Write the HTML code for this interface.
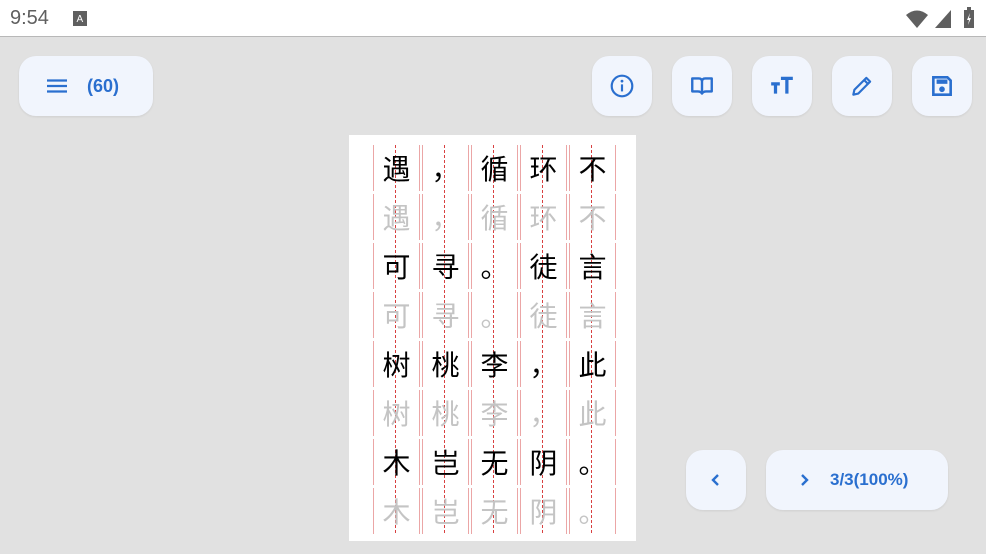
<!DOCTYPE html>
<html><head><meta charset="utf-8"><style>
*{margin:0;padding:0;box-sizing:border-box}
body{width:986px;height:554px;overflow:hidden;background:#e1e1e1;font-family:"Liberation Sans","Noto Sans CJK SC",sans-serif;position:relative}
.sb{position:absolute;left:0;top:0;width:986px;height:37px;background:#fff;border-bottom:1px solid #b8b8b8}
.time{position:absolute;left:10px;top:7px;font-size:20px;color:#5f5f5f}
.btn{position:absolute;background:#f1f5fd;border-radius:17px;box-shadow:0 1px 2px rgba(0,0,0,.08);display:flex;align-items:center;justify-content:center;color:#2a6fcf;font-weight:bold}
.paper{position:absolute;left:349px;top:135px;width:287px;height:406px;background:#fff}
.grid{position:absolute;left:373px;top:145px;display:grid;grid-template-columns:repeat(5,47px);grid-template-rows:repeat(8,46px);column-gap:2px;row-gap:3px}
.c{font-size:28px;line-height:46px;text-align:center;color:#000;font-family:"Noto Sans CJK SC",sans-serif}
.g .c{color:#c4c4c4}
.row{display:contents}
</style></head><body>
<div class="sb"><span class="time">9:54</span>
<svg style="position:absolute;left:73px;top:11px" width="14" height="15"><rect width="14" height="15" fill="#5f5f5f"/><text x="3.5" y="11" font-size="10" fill="#fff" font-family="Liberation Sans">A</text></svg>
<svg style="position:absolute;left:905px;top:9px" width="24" height="20"><path d="M1 6 Q12 -3 23 6 L12 19 Z" fill="#5f5f5f"/></svg>
<svg style="position:absolute;left:934px;top:9px" width="18" height="20"><path d="M17 1 V19 H1 Z" fill="#5f5f5f"/></svg>
<svg style="position:absolute;left:964px;top:7px" width="10" height="22"><rect x="0" y="3" width="10" height="18" fill="#5f5f5f"/><rect x="3" y="0" width="4" height="3" fill="#5f5f5f"/><path d="M6 6 L3 13 H5 L4 18 L7 11 H5 Z" fill="#fff"/></svg>
</div>

<div class="btn" style="left:19px;top:56px;width:134px;height:60px;justify-content:flex-start">
<svg style="margin-left:28px" width="20" height="14"><path d="M0 1.5H20M0 7H20M0 12.5H20" stroke="#2a6fcf" stroke-width="2.2"/></svg>
<span style="margin-left:20px;font-size:18px">(60)</span></div>

<div class="btn" style="left:592px;top:56px;width:60px;height:60px"><svg width="26" height="26" viewBox="0 0 24 24"><circle cx="12" cy="12" r="9.5" fill="none" stroke="#2a6fcf" stroke-width="2"/><rect x="11" y="10.5" width="2" height="6.5" fill="#2a6fcf"/><circle cx="12" cy="7.5" r="1.3" fill="#2a6fcf"/></svg></div>
<div class="btn" style="left:672px;top:56px;width:60px;height:60px"><svg width="26" height="26" viewBox="0 0 24 24"><path d="M3 5H9Q12 5 12 8V19Q11 17 8 17H3Z M21 5H15Q12 5 12 8V19Q13 17 16 17H21Z" fill="none" stroke="#2a6fcf" stroke-width="2.2" stroke-linejoin="round"/></svg></div>
<div class="btn" style="left:752px;top:56px;width:60px;height:60px"><svg width="26" height="26" viewBox="0 0 24 24"><path d="M2 10H10M6 10V19M11 5H22M16.5 5V19" stroke="#2a6fcf" stroke-width="3"/></svg></div>
<div class="btn" style="left:832px;top:56px;width:60px;height:60px"><svg width="26" height="26" viewBox="0 0 24 24"><path d="M4 20L5 15.5L16 4.5L19.5 8L8.5 19Z M14 6.5L17.5 10" fill="none" stroke="#2a6fcf" stroke-width="2" stroke-linejoin="round"/></svg></div>
<div class="btn" style="left:912px;top:56px;width:60px;height:60px"><svg width="26" height="26" viewBox="0 0 24 24"><path d="M4 4H17L20 7V20H4Z" fill="none" stroke="#2a6fcf" stroke-width="2.4"/><rect x="7" y="6" width="10" height="4" fill="#2a6fcf"/><circle cx="12" cy="15" r="2.6" fill="#2a6fcf"/></svg></div>

<div class="paper"></div>
<svg style="position:absolute;left:373px;top:145px" width="245" height="390">
<g stroke="#eba6a6" stroke-width="1">
<path d="M0.5 0V46M46.5 0V46M49.5 0V46M95.5 0V46M98.5 0V46M144.5 0V46M147.5 0V46M193.5 0V46M196.5 0V46M242.5 0V46" id="r"/>
<use href="#r" y="49"/><use href="#r" y="98"/><use href="#r" y="147"/><use href="#r" y="196"/><use href="#r" y="245"/><use href="#r" y="294"/><use href="#r" y="343"/>
</g>
<g stroke="#d84040" stroke-width="1" stroke-dasharray="3 2">
<path d="M22.5 0V389M71.5 0V389M120.5 0V389M169.5 0V389M218.5 0V389"/>
</g>
</svg>
<div class="grid">
<div class="row"><div class="c">遇</div><div class="c">，</div><div class="c">循</div><div class="c">环</div><div class="c">不</div></div>
<div class="row g"><div class="c">遇</div><div class="c">，</div><div class="c">循</div><div class="c">环</div><div class="c">不</div></div>
<div class="row"><div class="c">可</div><div class="c">寻</div><div class="c">。</div><div class="c">徒</div><div class="c">言</div></div>
<div class="row g"><div class="c">可</div><div class="c">寻</div><div class="c">。</div><div class="c">徒</div><div class="c">言</div></div>
<div class="row"><div class="c">树</div><div class="c">桃</div><div class="c">李</div><div class="c">，</div><div class="c">此</div></div>
<div class="row g"><div class="c">树</div><div class="c">桃</div><div class="c">李</div><div class="c">，</div><div class="c">此</div></div>
<div class="row"><div class="c">木</div><div class="c">岂</div><div class="c">无</div><div class="c">阴</div><div class="c">。</div></div>
<div class="row g"><div class="c">木</div><div class="c">岂</div><div class="c">无</div><div class="c">阴</div><div class="c">。</div></div>
</div>

<div class="btn" style="left:686px;top:450px;width:60px;height:60px"><svg width="12" height="14"><path d="M8 2L3 7L8 12" fill="none" stroke="#2a6fcf" stroke-width="2.4"/></svg></div>
<div class="btn" style="left:766px;top:450px;width:182px;height:60px;justify-content:flex-start"><svg style="margin-left:32px" width="12" height="14"><path d="M4 2L9 7L4 12" fill="none" stroke="#2a6fcf" stroke-width="2.4"/></svg><span style="margin-left:20px;font-size:17px">3/3(100%)</span></div>
</body></html>
